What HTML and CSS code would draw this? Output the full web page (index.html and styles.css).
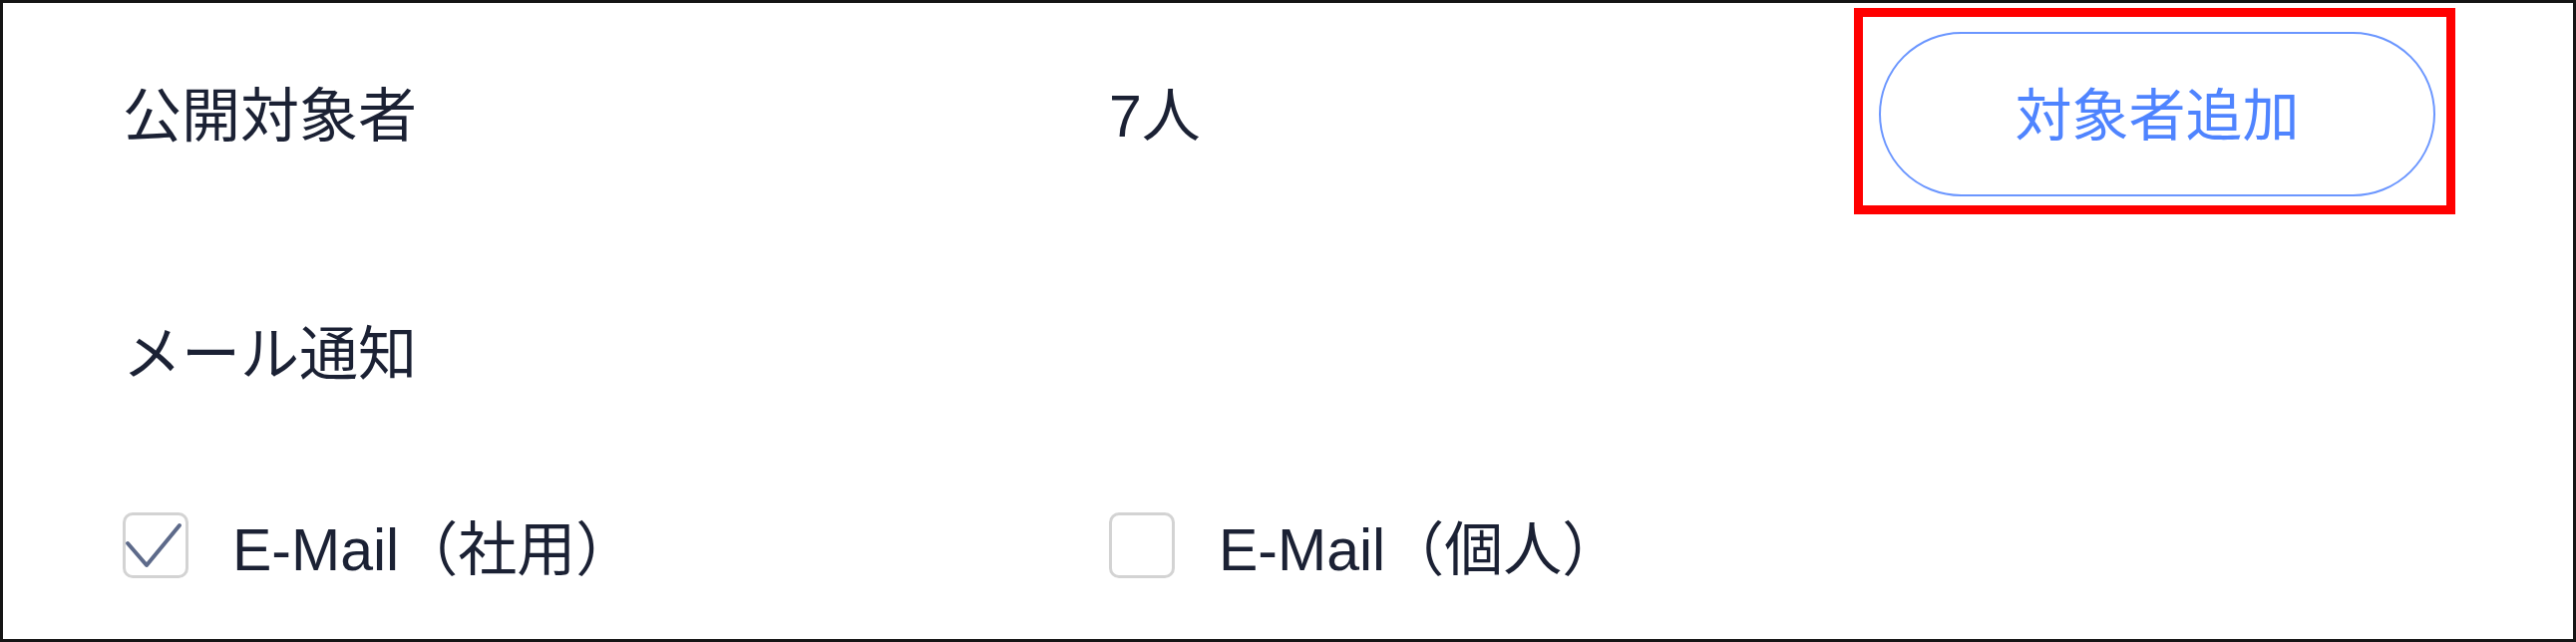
FILE: index.html
```html
<!DOCTYPE html>
<html lang="ja">

<head>
    <meta charset="UTF-8">
    <meta name="viewport" content="width=device-width, initial-scale=1.0">
    <title>公開設定</title>
    <link rel="stylesheet" href="styles.css">
</head>

<body>
    <div class="panel">
        <div class="row-top">
            <div class="label">公開対象者</div>
            <div class="count">7人</div>
            <div class="highlight">
                <button class="addBtn" type="button">対象者追加</button>
            </div>
        </div>

        <div class="row-title">メール通知</div>

        <div class="row-check">
            <label class="check-item">
                <span class="checkbox">
                    <svg viewBox="0 0 66 66" width="66" height="66">
                        <polyline points="5,31 24,53 57,13" fill="none" stroke="#5d6a8a" stroke-width="4" stroke-linejoin="round" stroke-linecap="round" />
                    </svg>
                </span>
                <span class="check-text">E-Mail（社用）</span>
            </label>
            <label class="check-item">
                <span class="checkbox"></span>
                <span class="check-text">E-Mail（個人）</span>
            </label>
        </div>
    </div>
</body>

</html>
```

FILE: styles.css
```css
* {
    padding: 0;
    margin: 0;
    box-sizing: border-box;
}

body {
    font-family: "Liberation Sans", "Noto Sans CJK JP", sans-serif;
    color: #1b2134;
    background-color: #fff;
}

.panel {
    width: 2583px;
    height: 644px;
    border: 3px solid #151515;
    padding: 4px 0 0 120px;
}

.row-top {
    display: flex;
    align-items: center;
    height: 208px;
    font-size: 59px;
}

.row-top .label {
    width: 989px;
}

.row-top .count {
    width: 747px;
}

.highlight {
    border: 9px solid #ff0000;
    padding: 15px 11px 9px 16px;
}

.addBtn {
    display: block;
    width: 558px;
    height: 165px;
    border: 2px solid #6b96ff;
    border-radius: 90px;
    background-color: #fff;
    color: #4f84ff;
    font-family: "Noto Sans CJK JP", sans-serif;
    font-size: 57px;
    padding-bottom: 6px;
}

.row-title {
    margin-top: 106px;
    font-size: 59px;
    line-height: 70px;
}

.row-check {
    display: flex;
    align-items: center;
    margin-top: 122px;
    height: 67px;
}

.check-item {
    display: flex;
    align-items: center;
    gap: 44px;
    font-size: 59px;
}

.check-item:first-child {
    width: 989px;
}

.checkbox {
    display: block;
    width: 66px;
    height: 66px;
    border: 3px solid #d3d3d3;
    border-radius: 10px;
    position: relative;
}

.checkbox svg {
    position: absolute;
    left: -3px;
    top: -3px;
}
```
